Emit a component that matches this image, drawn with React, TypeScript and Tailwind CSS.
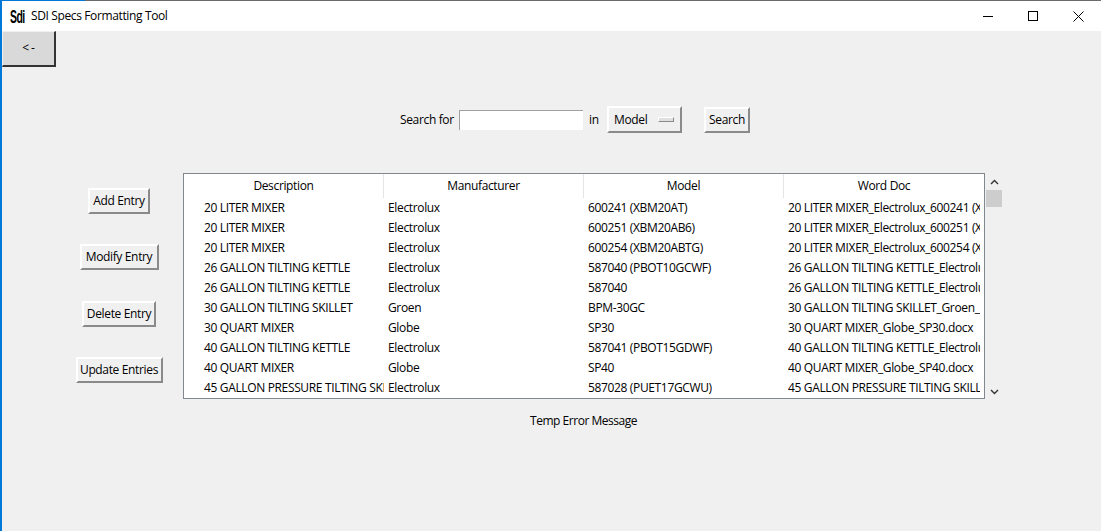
import React from 'react';

const rows = [
  ['20 LITER MIXER', 'Electrolux', '600241 (XBM20AT)', '20 LITER MIXER_Electrolux_600241 (XBM20AT).docx'],
  ['20 LITER MIXER', 'Electrolux', '600251 (XBM20AB6)', '20 LITER MIXER_Electrolux_600251 (XBM20AB6).docx'],
  ['20 LITER MIXER', 'Electrolux', '600254 (XBM20ABTG)', '20 LITER MIXER_Electrolux_600254 (XBM20ABTG).docx'],
  ['26 GALLON TILTING KETTLE', 'Electrolux', '587040 (PBOT10GCWF)', '26 GALLON TILTING KETTLE_Electrolux_587040.docx'],
  ['26 GALLON TILTING KETTLE', 'Electrolux', '587040', '26 GALLON TILTING KETTLE_Electrolux_587040.docx'],
  ['30 GALLON TILTING SKILLET', 'Groen', 'BPM-30GC', '30 GALLON TILTING SKILLET_Groen_BPM-30GC.docx'],
  ['30 QUART MIXER', 'Globe', 'SP30', '30 QUART MIXER_Globe_SP30.docx'],
  ['40 GALLON TILTING KETTLE', 'Electrolux', '587041 (PBOT15GDWF)', '40 GALLON TILTING KETTLE_Electrolux_587041.docx'],
  ['40 QUART MIXER', 'Globe', 'SP40', '40 QUART MIXER_Globe_SP40.docx'],
  ['45 GALLON PRESSURE TILTING SKILLET', 'Electrolux', '587028 (PUET17GCWU)', '45 GALLON PRESSURE TILTING SKILLET_Electrolux.docx'],
];

const headers = ['Description', 'Manufacturer', 'Model', 'Word Doc'];

function TkButton({ label, className }: { label: string; className: string }) {
  return (
    <button className={`flex h-[26px] items-center justify-center border-2 border-t-white border-l-white border-r-[#8a8a8a] border-b-[#8a8a8a] bg-[#f0f0f0] ${className}`}>
      {label}
    </button>
  );
}

function App() {
  return (
    <div
      className="flex h-[531px] w-[1101px] flex-col overflow-hidden border-l-2 border-[#0078d7] bg-[#f0f0f0] text-[12px] text-black"
      style={{ fontFamily: '"Open Sans", sans-serif' }}
    >
      {/* window top edge */}
      <div className="flex h-px shrink-0 bg-[#6b6b6b]">
        <div className="w-[83px] bg-[#0078d7]" />
      </div>

      {/* title bar */}
      <div className="flex h-[30px] shrink-0 items-center bg-white">
        <span className="ml-[8px] w-[21px] origin-left scale-x-[0.55] font-['Liberation_Sans'] text-[19px] font-bold leading-none tracking-[-1px]">Sdi</span>
        <span className="tracking-[-0.37px]">SDI Specs Formatting Tool</span>
        <div className="ml-auto flex items-center">
          <div className="h-px w-[10px] bg-black" />
          <div className="ml-[35px] h-[10px] w-[10px] border border-black" />
          <svg className="ml-[35px] mr-[17px]" width="11" height="11" viewBox="0 0 11 11">
            <path d="M0.5 0.5 L10.5 10.5 M10.5 0.5 L0.5 10.5" stroke="#000" fill="none" />
          </svg>
        </div>
      </div>

      {/* back button */}
      <button className="h-[36px] w-[54px] shrink-0 border border-b-2 border-r-2 border-[#f0f0f0] border-r-[#333] border-b-[#333] bg-[#d9d9d9] pb-[1px] pl-[2px] tracking-[2px]">
        &lt;-
      </button>

      {/* search row */}
      <div className="ml-[398px] mt-[39px] flex h-[27px] items-center tracking-[-0.35px]">
        <span className="w-[59px]">Search for</span>
        <div className="h-[20px] w-[124px] border-l border-t border-[#a0a0a0] bg-white" />
        <span className="ml-[6px] w-[18px]">in</span>
        <button className="flex h-[27px] w-[75px] items-center border-2 border-t-white border-l-white border-r-[#8a8a8a] border-b-[#8a8a8a] pl-[5px]">
          Model
          <span className="ml-[11px] h-[5px] w-[16px] border border-t-white border-l-white border-r-[#8a8a8a] border-b-[#8a8a8a] bg-[#e0e0e0]" />
        </button>
        <TkButton label="Search" className="ml-[22px] w-[46px]" />
      </div>

      {/* table area */}
      <div className="mt-[40px] flex items-start tracking-[-0.35px]">
        <div className="flex w-[181px] shrink-0 flex-col items-center pl-[53px] pt-[15px]">
          <TkButton label="Add Entry" className="w-[62px]" />
          <TkButton label="Modify Entry" className="mt-[30px] w-[79px]" />
          <TkButton label="Delete Entry" className="mt-[31px] w-[74px]" />
          <TkButton label="Update Entries" className="mt-[30px] w-[87px]" />
        </div>

        <div className="h-[226px] w-[802px] shrink-0 border border-[#828790] bg-white">
          <div className="flex h-[24px]">
            {headers.map((h, i) => (
              <div key={h} className={`flex w-[200px] items-center justify-center ${i < 3 ? 'border-r border-[#e5e5e5]' : ''}`}>
                {h}
              </div>
            ))}
          </div>
          {rows.map((r, i) => (
            <div key={i} className="flex h-[20px] items-center">
              <div className="w-[200px] overflow-hidden whitespace-nowrap pl-[20px]">{r[0]}</div>
              <div className="w-[200px] overflow-hidden whitespace-nowrap pl-[4px]">{r[1]}</div>
              <div className="w-[200px] overflow-hidden whitespace-nowrap pl-[4px]">{r[2]}</div>
              <div className="ml-[4px] w-[192px] overflow-hidden whitespace-nowrap">{r[3]}</div>
            </div>
          ))}
        </div>

        {/* scrollbar */}
        <div className="flex h-[226px] w-[17px] flex-col items-center pt-[6px]">
          <svg className="ml-px" width="9" height="6" viewBox="0 0 9 6">
            <path d="M1 5 L4.5 1.5 L8 5" stroke="#333" strokeWidth="1.4" fill="none" />
          </svg>
          <div className="mt-[5px] h-[17px] w-[16px] bg-[#cdcdcd]" />
          <svg className="mb-[4px] ml-px mt-auto" width="9" height="6" viewBox="0 0 9 6">
            <path d="M1 1 L4.5 4.5 L8 1" stroke="#333" strokeWidth="1.4" fill="none" />
          </svg>
        </div>
      </div>

      <div className="ml-[528px] mt-[13px] tracking-[-0.47px]">Temp Error Message</div>
    </div>
  );
}

export default App;
